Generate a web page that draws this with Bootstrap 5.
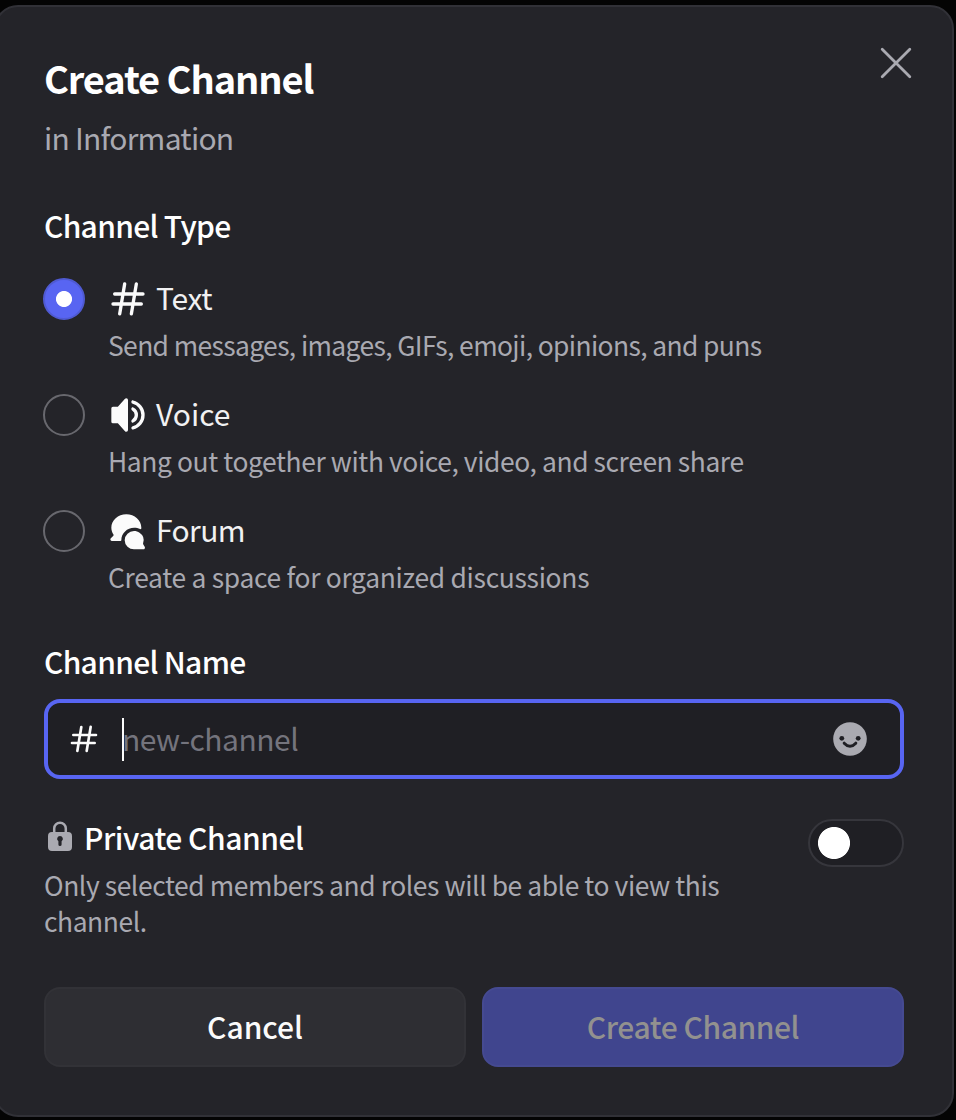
<!DOCTYPE html>
<html lang="en" data-bs-theme="dark">
<head>
<meta charset="utf-8">
<meta name="viewport" content="width=device-width, initial-scale=1">
<title>Create Channel</title>
<link rel="stylesheet" href="https://cdn.jsdelivr.net/npm/bootstrap@5.3.0/dist/css/bootstrap.min.css">
<style>
  body { background: #040404; font-family: "Noto Sans CJK SC", "Noto Sans", sans-serif; color: #fbfbfb; height: 1120px; overflow: hidden; }
  .dialog-card { width: 960px; height: 1112px; margin: 5px 0 0 -6px; padding: 47px 48px 48px; background: #242429; border: 2px solid #313137; border-radius: 24px; }
  .title { font-size: 38px; line-height: 48px; font-weight: 700; letter-spacing: -1.1px; margin-bottom: 15px; }
  .line { font-size: 30px; line-height: 40px; white-space: nowrap; }
  .strong { font-weight: 500; letter-spacing: -.7px; }
  .hint { font-size: 26.4px; line-height: 36px; color: #a9a9b1; margin-top: 10px; }
  .muted { color: #a9a9b1; letter-spacing: -.75px; }
  .closer { width: 40px; height: 40px; margin: -11px -12px 0 0; color: #aaaab1; }
  .option { display: flex; gap: 23px; height: 84px; margin-bottom: 32px; color: #f1f1f2; }
  .option + .option .line { color: #f1f1f2; }
  .choice.form-check-input { flex: none; width: 42px; height: 42px; margin: 1px 0 0 -1px; background-color: transparent; border: 2px solid #68686e; }
  .choice.form-check-input:checked { background: radial-gradient(circle, #fff 7.6px, #5865f2 8.4px); border-color: #4f5ad2; }
  .icon40 { width: 40px; height: 40px; flex: none; color: #fbfbfb; }
  .option .icon40 { margin-top: 2px; margin-bottom: -2px; }
  .icon32 { width: 32px; height: 32px; flex: none; }
  .field { height: 80px; margin-top: 18px; padding: 0 30px 0 20px; border: 4px solid #5865f2; border-radius: 16px; background: #1f1f24; }
  .field .form-control { color: #74747d; line-height: 40px; letter-spacing: -.5px; margin: -2px 0 0 -2px; }
  .caret { width: 2px; height: 43px; margin-left: 22px; background: #fbfbfb; flex: none; position: relative; z-index: 1; }
  .private { margin-top: 38px; height: 120px; }
  .toggler.form-check-input { flex: none; width: 96px; height: 48px; margin: 2px 0 0; border: 2px solid #36363c; border-radius: 24px; background: radial-gradient(circle at 24px 22px, #fff 15.6px, transparent 16.4px) #1f1f24; }
  .action { height: 80px; border-radius: 16px; border: 2px solid; font-size: 30px; line-height: 40px; font-weight: 500; padding: 0 0 3px; flex: 1 1 0; }
  .cancel, .cancel:hover { background: #2e2e33; border-color: #323237; color: #fbfbfb; }
  .create.btn:disabled { background: #40458e; border-color: #454a91; color: #92918f; opacity: 1; letter-spacing: -.43px; }
</style>
</head>
<body>
<main class="dialog-card">
  <header class="d-flex justify-content-between align-items-start">
    <div>
      <h1 class="title">Create Channel</h1>
      <div class="line muted">in Information</div>
    </div>
    <button class="btn p-0 border-0 closer" aria-label="Close">
      <svg class="d-block" width="40" height="40" viewBox="0 0 40 40" fill="none" stroke="currentColor" stroke-width="2.8" stroke-linecap="round"><path d="M6.200 6.200 33.800 33.800M33.800 6.200 6.200 33.800"/></svg>
    </button>
  </header>

  <section style="margin-top:48px">
    <h2 class="line strong mb-0">Channel Type</h2>
    <div style="height:32px"></div>
    <label class="option">
      <input class="form-check-input choice" type="radio" name="kind" checked>
      <span class="d-block">
        <span class="d-flex gap-2 line">
          <svg class="icon40" viewBox="0 0 24 24" fill="currentColor"><path fill-rule="evenodd" d="M10.99 3.16A1 1 0 1 0 9 2.84L8.15 8H4a1 1 0 0 0 0 2h3.82l-.67 4H3a1 1 0 1 0 0 2h3.82l-.8 4.84a1 1 0 0 0 1.97.32L8.85 16h4.97l-.8 4.84a1 1 0 0 0 1.97.32l.86-5.16H20a1 1 0 1 0 0-2h-3.82l.67-4H21a1 1 0 1 0 0-2h-3.82l.8-4.84a1 1 0 1 0-1.97-.32L15.15 8h-4.97l.8-4.84ZM14.15 14l.67-4H9.85l-.67 4h4.97Z"/></svg>
          <span style="letter-spacing:-.3px">Text</span>
        </span>
        <span class="d-block hint" style="letter-spacing:-.61px">Send messages, images, GIFs, emoji, opinions, and puns</span>
      </span>
    </label>
    <label class="option">
      <input class="form-check-input choice" type="radio" name="kind">
      <span class="d-block">
        <span class="d-flex gap-2 line">
          <svg class="icon40" viewBox="0 0 24 24" fill="currentColor"><path d="M12 3a1 1 0 0 0-1-1h-.06a1 1 0 0 0-.74.32L5.92 7H3a1 1 0 0 0-1 1v8a1 1 0 0 0 1 1h2.92l4.28 4.68a1 1 0 0 0 .74.32H11a1 1 0 0 0 1-1V3ZM15.1 20.75c-.58.14-1.1-.33-1.1-.92v-.03c0-.5.37-.92.85-1.05a7 7 0 0 0 0-13.5A1.11 1.11 0 0 1 14 4.2v-.03c0-.6.52-1.06 1.1-.92a9 9 0 0 1 0 17.5Z"/><path d="M15.16 16.51c-.57.28-1.16-.2-1.16-.83v-.14c0-.43.28-.8.63-1.02a3 3 0 0 0 0-5.04c-.35-.23-.63-.6-.63-1.02v-.14c0-.63.59-1.1 1.16-.83a5 5 0 0 1 0 9.02Z"/></svg>
          <span>Voice</span>
        </span>
        <span class="d-block hint" style="letter-spacing:-.4px">Hang out together with voice, video, and screen share</span>
      </span>
    </label>
    <label class="option mb-0">
      <input class="form-check-input choice" type="radio" name="kind">
      <span class="d-block">
        <span class="d-flex gap-2 line">
          <svg class="icon40" viewBox="0 0 24 24" fill="currentColor"><path d="M18.91 12.98a5.45 5.45 0 0 1 2.18 6.2c-.1.33-.09.68.1.96l.83 1.32a1 1 0 0 1-.84 1.54h-5.5A5.6 5.6 0 0 1 10 17.5a5.6 5.6 0 0 1 5.68-5.5c1.2 0 2.32.36 3.23.98Z"/><path d="M19.24 10.86c.32.16.72-.02.74-.38L20 10c0-4.42-4.03-8-9-8s-9 3.58-9 8c0 1.5.47 2.91 1.28 4.11.14.21.12.49-.06.67l-1.51 1.51A1 1 0 0 0 2.4 18h5.1a.5.5 0 0 0 .49-.5c0-4.2 3.5-7.5 7.68-7.5 1.28 0 2.5.3 3.56.86Z"/></svg>
          <span style="letter-spacing:-.6px">Forum</span>
        </span>
        <span class="d-block hint" style="letter-spacing:-.29px">Create a space for organized discussions</span>
      </span>
    </label>
  </section>

  <section style="margin-top:48px">
    <h2 class="line strong mb-0">Channel Name</h2>
    <div class="field d-flex align-items-center">
      <svg class="icon32" viewBox="0 0 24 24" fill="currentColor"><path fill-rule="evenodd" d="M10.99 3.16A1 1 0 1 0 9 2.84L8.15 8H4a1 1 0 0 0 0 2h3.82l-.67 4H3a1 1 0 1 0 0 2h3.82l-.8 4.84a1 1 0 0 0 1.97.32L8.85 16h4.97l-.8 4.84a1 1 0 0 0 1.97.32l.86-5.16H20a1 1 0 1 0 0-2h-3.82l.67-4H21a1 1 0 1 0 0-2h-3.82l.8-4.84a1 1 0 1 0-1.97-.32L15.15 8h-4.97l.8-4.84ZM14.15 14l.67-4H9.85l-.67 4h4.97Z"/></svg>
      <span class="caret"></span>
      <div class="form-control line border-0 bg-transparent p-0 flex-grow-1">new-channel</div>
      <svg class="icon40" viewBox="0 0 40 40"><circle cx="20" cy="20" r="16.8" fill="#aaaab1"/><g fill="#1f1f24"><circle cx="11.8" cy="19.3" r="2.4"/><circle cx="28.2" cy="19.3" r="2.4"/></g><path d="M14.200 24.200Q20 30.400 25.800 24.200" fill="none" stroke="#1f1f24" stroke-width="3" stroke-linecap="round"/></svg>
    </div>
  </section>

  <section class="private d-flex justify-content-between align-items-start">
    <div>
      <h2 class="d-flex gap-2 line strong mb-0">
        <svg class="icon32" style="margin-top:4px" viewBox="0 0 32 32"><path d="M10.200 12V7.500a5.800 5.800 0 0 1 11.600 0V12" fill="none" stroke="#aaaab1" stroke-width="2.500"/><path fill="#aaaab1" fill-rule="evenodd" d="M8 11h16a4 4 0 0 1 4 4v11a4 4 0 0 1-4 4H8a4 4 0 0 1-4-4V15a4 4 0 0 1 4-4Zm8 4a2.900 2.900 0 0 0-1.600 5.300V23.400a1.600 1.600 0 0 0 3.200 0V20.300A2.900 2.900 0 0 0 16 15Z"/></svg>
        <span style="letter-spacing:-.47px">Private Channel</span>
      </h2>
      <div class="hint" style="letter-spacing:-.42px">Only selected members and roles will be able to view this<br>channel.</div>
    </div>
    <input class="form-check-input toggler" type="checkbox" role="switch" aria-label="Private Channel">
  </section>

  <footer class="d-flex gap-3" style="margin-top:50px">
    <button class="btn action cancel">Cancel</button>
    <button class="btn action create" disabled>Create Channel</button>
  </footer>
</main>
<script src="https://cdn.jsdelivr.net/npm/bootstrap@5.3.0/dist/js/bootstrap.bundle.min.js"></script>
</body>
</html>
